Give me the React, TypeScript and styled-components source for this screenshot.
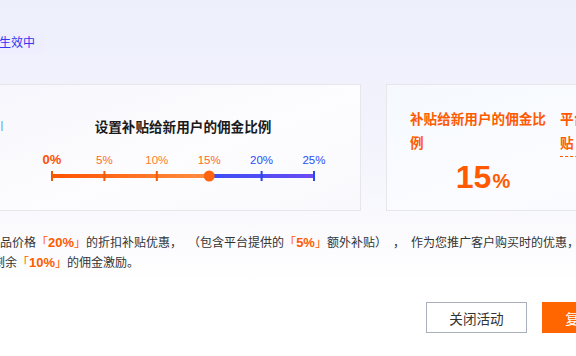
import React, { ReactElement } from 'react'
import styled, { createGlobalStyle } from 'styled-components'

const GlobalStyle = createGlobalStyle`
  html, body {
    margin: 0;
    padding: 0;
    overflow: hidden;
  }

  body {
    font-family: "Liberation Sans", "Noto Sans CJK SC", sans-serif;
    color: #333;
    text-spacing-trim: space-all;
  }
`

const ticks = [
  { label: '0%', color: '#ff5000', strong: true },
  { label: '5%', color: '#ff6c1c' },
  { label: '10%', color: '#ff7a2a' },
  { label: '15%', color: '#ff6a1a' },
  { label: '20%', color: '#2a4cf2' },
  { label: '25%', color: '#2a4cf2' },
]

const STEP = 52.4
const ACTIVE = 3

const SliderTrack: React.FC = (): ReactElement => {
  const knobX = 5 + STEP * ACTIVE
  return (
    <TrackSvg width="272" height="12" viewBox="0 0 272 12">
      <defs>
        <linearGradient id="orangeTrack" x1="0" x2="1" y1="0" y2="0">
          <stop offset="0" stopColor="#ff5300" />
          <stop offset="1" stopColor="#ff8d40" />
        </linearGradient>
        <linearGradient id="blueTrack" x1="0" x2="1" y1="0" y2="0">
          <stop offset="0" stopColor="#3a4ef6" />
          <stop offset="1" stopColor="#6b4cf2" />
        </linearGradient>
      </defs>
      <rect x="5" y="4" width={knobX - 5} height="4" fill="url(#orangeTrack)" />
      <rect x={knobX} y="4" width={267 - knobX} height="4" fill="url(#blueTrack)" />
      {ticks.map((t, i) =>
        i === ACTIVE ? null : (
          <rect
            key={t.label}
            x={5 + STEP * i - 1}
            y="1"
            width="2"
            height="10"
            fill={i < ACTIVE ? '#f05a00' : '#2a46e6'}
          />
        ),
      )}
      <circle cx={knobX} cy="6" r="5.5" fill="#ff6410" />
    </TrackSvg>
  )
}

const App: React.FC = (): ReactElement => {
  return (
    <Stage>
      <GlobalStyle />
      <Canvas>
        <Header>
          <Badge>生效中</Badge>
        </Header>

        <CardRow>
          <SliderCard>
            <Marker />
            <SliderSection>
              <SliderTitle>设置补贴给新用户的佣金比例</SliderTitle>
              <LabelRow>
                {ticks.map((t) => (
                  <TickLabel key={t.label} color={t.color} $strong={t.strong}>
                    {t.label}
                  </TickLabel>
                ))}
              </LabelRow>
              <SliderTrack />
            </SliderSection>
          </SliderCard>

          <SummaryCard>
            <Stat>
              <StatTitle>补贴给新用户的佣金比例</StatTitle>
              <StatValue>
                15<small>%</small>
              </StatValue>
            </Stat>
            <Stat>
              <StatTitle $dashed>平台给新用户的额外补贴</StatTitle>
              <StatValue>
                5<small>%</small>
              </StatValue>
            </Stat>
          </SummaryCard>
        </CardRow>

        <Description>
          品价格<Hl>「<b>20%</b>」</Hl>的折扣补贴优惠，<Gap />（包含平台提供的<Hl>「<b>5%</b>」</Hl>额外补贴）<Gap />，<Gap />作为您推广客户购买时的优惠，平台将从您的佣金中扣除，
          <br />
          剩余<Hl>「<b>10%</b>」</Hl>的佣金激励。
        </Description>

        <Actions>
          <Button>关闭活动</Button>
          <Button $primary>复制链接</Button>
        </Actions>
      </Canvas>
    </Stage>
  )
}

const Stage = styled.div`
  width: 576px;
  height: 356px;
  overflow: hidden;
  background: linear-gradient(180deg, #edeffb 0%, #f2f3fc 40%, #fbfbfe 66%, #ffffff 80%);
`

const Canvas = styled.div`
  margin-left: -40px;
  width: 760px;
`

const Header = styled.div`
  height: 84px;
  box-sizing: border-box;
  padding-top: 32px;
`

const Badge = styled.span`
  display: inline-block;
  margin-left: 31px;
  height: 22px;
  padding: 0 9px 0 8px;
  line-height: 22px;
  font-size: 12px;
  color: #3434f2;
  background: #efeefe;
  border-radius: 3px;
`

const CardRow = styled.div`
  display: flex;
  gap: 25px;
  margin-left: 20px;
  height: 127px;
`

const SliderCard = styled.div`
  display: flex;
  width: 381px;
  box-sizing: border-box;
  padding-left: 20px;
  border: 1px solid #e6e6eb;
  background: linear-gradient(160deg, #f6f6fc 0%, #fdfdff 55%, #f9f9fd 100%);
`

const Marker = styled.div`
  width: 2px;
  height: 10px;
  margin-top: 36px;
  background: #8ad6f8;
`

const SliderSection = styled.div`
  display: flex;
  flex-direction: column;
  width: 302px;
  margin-left: 29px;
  padding-top: 33px;
`

const SliderTitle = styled.div`
  text-align: center;
  font-size: 13.6px;
  line-height: 20px;
  font-weight: bold;
  color: #1a1a1a;
`

const LabelRow = styled.div`
  display: flex;
  justify-content: space-between;
  margin-top: 14px;
  height: 16px;
`

const TickLabel = styled.span<{ color: string; $strong?: boolean }>`
  width: 40px;
  text-align: center;
  line-height: 16px;
  font-size: ${(p) => (p.$strong ? '13px' : '11.5px')};
  font-weight: ${(p) => (p.$strong ? 'bold' : 'normal')};
  color: ${(p) => p.color};
`

const TrackSvg = styled.svg`
  display: block;
  margin: 2px 0 0 15px;
`

const SummaryCard = styled.div`
  display: flex;
  gap: 10px;
  width: 320px;
  box-sizing: border-box;
  padding: 23px 0 0 23px;
  border: 1px solid #e6e6eb;
  background: linear-gradient(160deg, #f5f9fe 0%, #fbfcff 60%, #f8faff 100%);
`

const Stat = styled.div`
  display: flex;
  flex-direction: column;
  align-items: flex-start;
  width: 140px;
`

const StatTitle = styled.div<{ $dashed?: boolean }>`
  font-size: 13.6px;
  line-height: 24px;
  font-weight: bold;
  color: #ff5a00;
  border-bottom: ${(p) => (p.$dashed ? '1px dashed #ff5a00' : 'none')};
`

const StatValue = styled.div`
  align-self: stretch;
  margin-top: 3px;
  padding-left: 6px;
  text-align: center;
  font-size: 32px;
  line-height: 36px;
  font-weight: bold;
  color: #ff5a00;

  small {
    font-size: 20px;
    margin-left: 1px;
  }
`

const Description = styled.p`
  margin: 22px 0 0 33px;
  text-indent: 7px;
  white-space: nowrap;
  font-size: 12px;
  line-height: 20px;
  color: #333;
  text-spacing-trim: space-all;
`

const Gap = styled.span`
  display: inline-block;
  width: 6px;
`

const Hl = styled.span`
  color: #ff5a00;

  b {
    font-size: 13px;
    font-weight: bold;
  }
`

const Actions = styled.div`
  display: flex;
  gap: 15px;
  margin: 29px 0 0 466px;
`

const Button = styled.button<{ $primary?: boolean }>`
  width: 101px;
  height: 31px;
  box-sizing: border-box;
  padding: 0;
  font-family: inherit;
  font-size: 13.6px;
  color: ${(p) => (p.$primary ? '#fff' : '#333')};
  background: ${(p) => (p.$primary ? '#ff6600' : '#fff')};
  border: 1px solid ${(p) => (p.$primary ? '#ff6600' : '#a9b0bb')};
  border-radius: 0;
  cursor: pointer;
`

export default App
